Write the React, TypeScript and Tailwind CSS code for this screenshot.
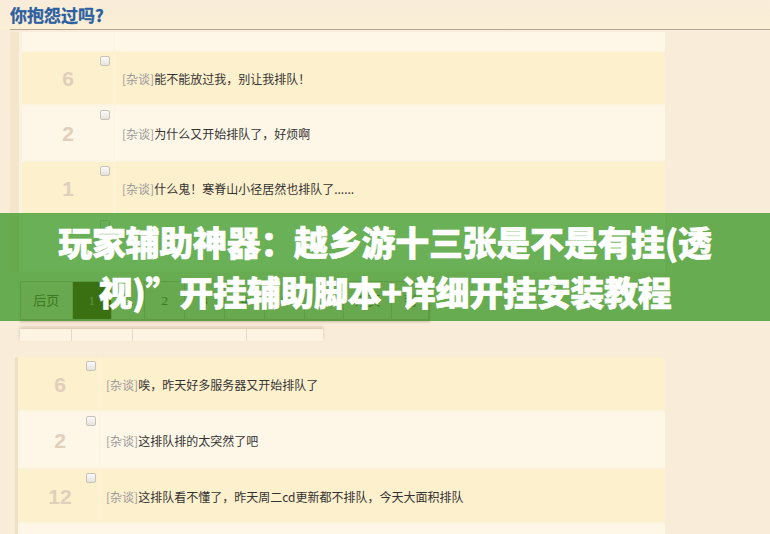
import React from "react";

type Row = { n: string; text: string; tone: "y" | "l" };

const topRows: Row[] = [
  { n: "6", text: "能不能放过我，别让我排队！", tone: "y" },
  { n: "2", text: "为什么又开始排队了，好烦啊", tone: "l" },
  { n: "1", text: "什么鬼！寒脊山小径居然也排队了......", tone: "y" },
  { n: "", text: "", tone: "l" },
];

const bottomRows: Row[] = [
  { n: "6", text: "唉，昨天好多服务器又开始排队了", tone: "y" },
  { n: "2", text: "这排队排的太突然了吧", tone: "l" },
  { n: "12", text: "这排队看不懂了，昨天周二cd更新都不排队，今天大面积排队", tone: "y" },
];

const heights1 = ["h-[54px]", "h-[56px]", "h-[54px]", "h-[56px]"];
const heights2 = ["h-[55px]", "h-[57px]", "h-[55px]"];

function CheckBox() {
  return (
    <span className="block w-[10px] h-[10px] rounded-[2px] border border-[#c8c2b8] bg-gradient-to-b from-[#fbfbfa] to-[#e6e3de]" />
  );
}

function TopicRow({
  row,
  h,
  numW,
}: {
  row: Row;
  h: string;
  numW: "wide" | "narrow";
}) {
  const bg = row.tone === "y" ? "bg-[#fdf0cd]" : "bg-[#fef7e7]";
  return (
    <div className={`flex ${h} ${bg} border-b-2 border-[#fcf4e0]`}>
      <div
        className={`relative flex items-center justify-center border-r border-[#fbf3de] ${
          numW === "wide" ? "w-[93px]" : "w-[82px]"
        }`}
      >
        {row.n && (
          <span
            className={`text-[21px] font-bold text-[#e0cfbb] font-['Liberation_Sans',Arial,sans-serif] mt-[2px] ${
              numW === "narrow" ? "ml-[3px]" : ""
            }`}
          >
            {row.n}
          </span>
        )}
        <span className={`absolute top-[4px] ${numW === "wide" ? "right-[4px]" : "right-[3px]"}`}>
          <CheckBox />
        </span>
      </div>
      {row.text && (
        <div
          className={`flex items-center text-[12px] text-[#333] ${
            numW === "wide" ? "pl-[7px]" : "pl-[6px]"
          } mt-[2px]`}
        >
          <span className="text-[#9a9a9a]">[杂谈]</span>
          <span>{row.text}</span>
        </div>
      )}
    </div>
  );
}

const pager = [
  { t: "后页", w: "w-[52px]" },
  { t: "1", w: "w-[39px]", active: true },
  { t: "…", w: "w-[34px]" },
  { t: "2", w: "w-[40px]" },
  { t: "3", w: "w-[40px]" },
  { t: "4", w: "w-[40px]" },
  { t: "5", w: "w-[40px]" },
  { t: "6", w: "w-[40px]" },
  { t: "末页", w: "w-[48px]" },
  { t: "到", w: "w-[37px]" },
];

export default function App() {
  return (
    <div className="relative w-[770px] h-[534px] overflow-hidden bg-[#f9ecd9] font-['Noto_Sans_CJK_SC','Noto_Sans',sans-serif]">
      {/* title bar */}
      <div className="h-[30px] pl-[10px] bg-gradient-to-b from-[#f9ecd9] to-[#fbefd6]">
        <div className="h-full border-b border-[#b4a594] flex items-center">
          <span className="text-[17px] font-bold leading-none text-[#2b5f9f] mb-[1px] [-webkit-text-stroke:0.3px_#2b5f9f]">
            你抱怨过吗?
          </span>
        </div>
      </div>

      {/* upper topic list */}
      <div className="flex pt-[2px]">
        <div className="w-[10px]" />
        <div className="w-[9px] bg-[#f4e5cb]" />
        <div className="w-[3px] bg-[#fbf3e2]" />
        <div className="w-[643px]">
          <div className="h-[20px] bg-[#fef7e7] border-b-2 border-[#fcf4e0] flex">
            <div className="w-[93px] border-r border-[#fbf3de]" />
          </div>
          {topRows.map((r, i) => (
            <TopicRow key={i} row={r} h={heights1[i]} numW="wide" />
          ))}
        </div>
      </div>

      {/* pager */}
      <div className="pl-[20px] pt-[9px]">
        <div className="flex h-[39px] w-[410px] bg-[#f7dccb] border border-[#d5b1aa] shadow-[0_2px_2px_rgba(120,90,70,0.35)]">
          {pager.map((p, i) => (
            <div
              key={i}
              className={`${p.w} flex items-center justify-center text-[13px] border-r border-[#d5b1aa] ${
                p.active ? "bg-[#5f2306] text-[#d0a0a0]" : "text-[#644040]"
              } font-['Liberation_Serif','Noto_Sans_CJK_SC',serif]`}
            >
              {p.t}
            </div>
          ))}
        </div>
      </div>

      {/* column header strip */}
      <div className="pl-[20px] pt-[9px]">
        <div className="flex h-[12px] w-[303px] bg-[#fdf5e2] shadow-[0_-2px_3px_rgba(160,130,110,0.35)]">
          <div className="w-[52px] border-r border-[#e6dac6]" />
          <div className="w-[61px] border-r border-[#e6dac6]" />
          <div className="w-[114px] border-r border-[#e6dac6]" />
          <div className="w-[75px]" />
        </div>
      </div>

      {/* lower topic list */}
      <div className="flex pt-[16px]">
        <div className="w-[15px]" />
        <div className="w-[3px] bg-[#efe0c6]" />
        <div className="w-[647px]">
          {bottomRows.map((r, i) => (
            <TopicRow key={i} row={r} h={heights2[i]} numW="narrow" />
          ))}
          <div className="h-[20px] bg-[#fef7e7]" />
        </div>
      </div>

      {/* headline banner */}
      <div className="absolute left-0 top-[213px] w-full h-[108px] bg-[rgba(43,146,24,0.7)] flex flex-col items-center justify-center text-white font-black text-[34px] leading-[50px] tracking-[-0.3px] [-webkit-text-stroke:0.6px_white]">
        <div>玩家辅助神器：越乡游十三张是不是有挂(透</div>
        <div>视)”开挂辅助脚本+详细开挂安装教程</div>
      </div>
    </div>
  );
}
